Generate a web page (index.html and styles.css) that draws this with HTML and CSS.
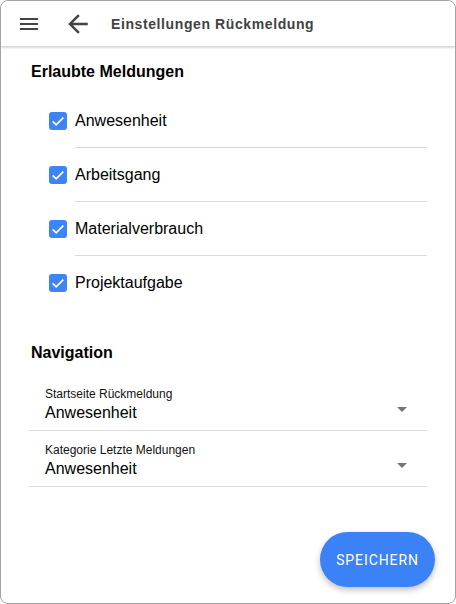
FILE: index.html
```html
<!DOCTYPE html>
<html lang="de">
<head>
<meta charset="utf-8">
<title>Einstellungen Rückmeldung</title>
<link rel="stylesheet" href="styles.css">
</head>
<body>
<div class="window">
  <header class="header">
    <svg class="icon-menu" width="18" height="12" viewBox="0 0 18 12"><path d="M0 1h18M0 6h18M0 11h18" stroke="#444" stroke-width="2"/></svg>
    <svg class="icon-back" width="22" height="22" viewBox="3 3 18 18"><path d="M20 11H7.83l5.59-5.59L12 4l-8 8 8 8 1.41-1.41L7.83 13H20v-2z" fill="#444"/></svg>
    <h1 class="title">Einstellungen Rückmeldung</h1>
  </header>
  <main class="content">
    <h2 class="section-title">Erlaubte Meldungen</h2>
    <ul class="checks">
      <li class="check-row"><span class="box"><svg width="16" height="16" viewBox="0 0 24 24"><path d="M4 12.5l5.2 5.2L20 7" fill="none" stroke="#fff" stroke-width="2.6"/></svg></span><span class="check-label">Anwesenheit</span></li>
      <li class="check-row"><span class="box"><svg width="16" height="16" viewBox="0 0 24 24"><path d="M4 12.5l5.2 5.2L20 7" fill="none" stroke="#fff" stroke-width="2.6"/></svg></span><span class="check-label">Arbeitsgang</span></li>
      <li class="check-row"><span class="box"><svg width="16" height="16" viewBox="0 0 24 24"><path d="M4 12.5l5.2 5.2L20 7" fill="none" stroke="#fff" stroke-width="2.6"/></svg></span><span class="check-label">Materialverbrauch</span></li>
      <li class="check-row"><span class="box"><svg width="16" height="16" viewBox="0 0 24 24"><path d="M4 12.5l5.2 5.2L20 7" fill="none" stroke="#fff" stroke-width="2.6"/></svg></span><span class="check-label last">Projektaufgabe</span></li>
    </ul>
    <h2 class="section-title nav-title">Navigation</h2>
    <div class="select">
      <div class="select-text">
        <span class="select-label">Startseite Rückmeldung</span>
        <span class="select-value">Anwesenheit</span>
      </div>
      <span class="caret"></span>
    </div>
    <div class="select">
      <div class="select-text">
        <span class="select-label">Kategorie Letzte Meldungen</span>
        <span class="select-value">Anwesenheit</span>
      </div>
      <span class="caret"></span>
    </div>
    <div class="actions">
      <button class="fab">SPEICHERN</button>
    </div>
  </main>
</div>
</body>
</html>
```
FILE: styles.css
```css
* { box-sizing: border-box; }
html, body { margin: 0; padding: 0; background: #fff; }
body { font-family: "Liberation Sans", Arial, sans-serif; color: #000; }

.window {
  width: 456px;
  height: 604px;
  border: 1px solid #a3a3a3;
  border-radius: 8px;
  overflow: hidden;
  display: flex;
  flex-direction: column;
  background: #fff;
}

.header {
  height: 45px;
  flex: none;
  display: flex;
  align-items: center;
  padding-left: 19px;
  background: #fff;
  box-shadow: 0 1px 3px rgba(0,0,0,0.25);
  position: relative;
  z-index: 1;
}
.icon-menu { display: block; }
.icon-back { display: block; margin-left: 29px; }
.title {
  margin: 0 0 0 22px;
  font-size: 14px;
  font-weight: bold;
  letter-spacing: 0.6px;
  color: #424242;
}

.content {
  flex: 1;
  display: flex;
  flex-direction: column;
  padding: 16px 28px 0 28px;
}

.section-title {
  margin: 0 0 0 2px;
  font-size: 16px;
  font-weight: bold;
  line-height: 20px;
}

.checks {
  list-style: none;
  margin: 12px 0 0 0;
  padding: 0 0 0 20px;
}
.check-row {
  display: flex;
  align-items: stretch;
  height: 54px;
}
.box {
  width: 18px;
  height: 18px;
  border-radius: 3px;
  background: #3d84f6;
  display: flex;
  align-items: center;
  justify-content: center;
  align-self: center;
  flex: none;
}
.check-label {
  flex: 1;
  margin-left: 8px;
  display: flex;
  align-items: center;
  font-size: 16px;
  border-bottom: 1px solid #dcdcdc;
  padding-top: 1px;
}
.check-label.last { border-bottom-color: transparent; }

.nav-title { margin-top: 33px; }

.select {
  margin-top: 12px;
  height: 56px;
  border-bottom: 1px solid #dcdcdc;
  display: flex;
  align-items: center;
  padding: 0 20px 0 16px;
}
.select + .select { margin-top: 0; }
.select-text { flex: 1; display: flex; flex-direction: column; padding-top: 5px; }
.select-label { font-size: 12px; line-height: 14px; color: #111; }
.select-value { font-size: 16px; line-height: 22px; margin-top: 1px; }
.caret {
  width: 0;
  height: 0;
  border-left: 5px solid transparent;
  border-right: 5px solid transparent;
  border-top: 5px solid #757575;
  margin-top: 14px;
}

.actions {
  flex: 1;
  display: flex;
  justify-content: flex-end;
  align-items: flex-end;
  padding-bottom: 16px;
  margin-right: -8px;
}
.fab {
  width: 115px;
  height: 55px;
  border: none;
  border-radius: 28px;
  background: #3b82f6;
  color: #fff;
  font-family: Roboto, "Liberation Sans", sans-serif;
  font-size: 14px;
  letter-spacing: 0.9px;
  box-shadow: 0 3px 6px rgba(0,0,0,0.25);
}
```
